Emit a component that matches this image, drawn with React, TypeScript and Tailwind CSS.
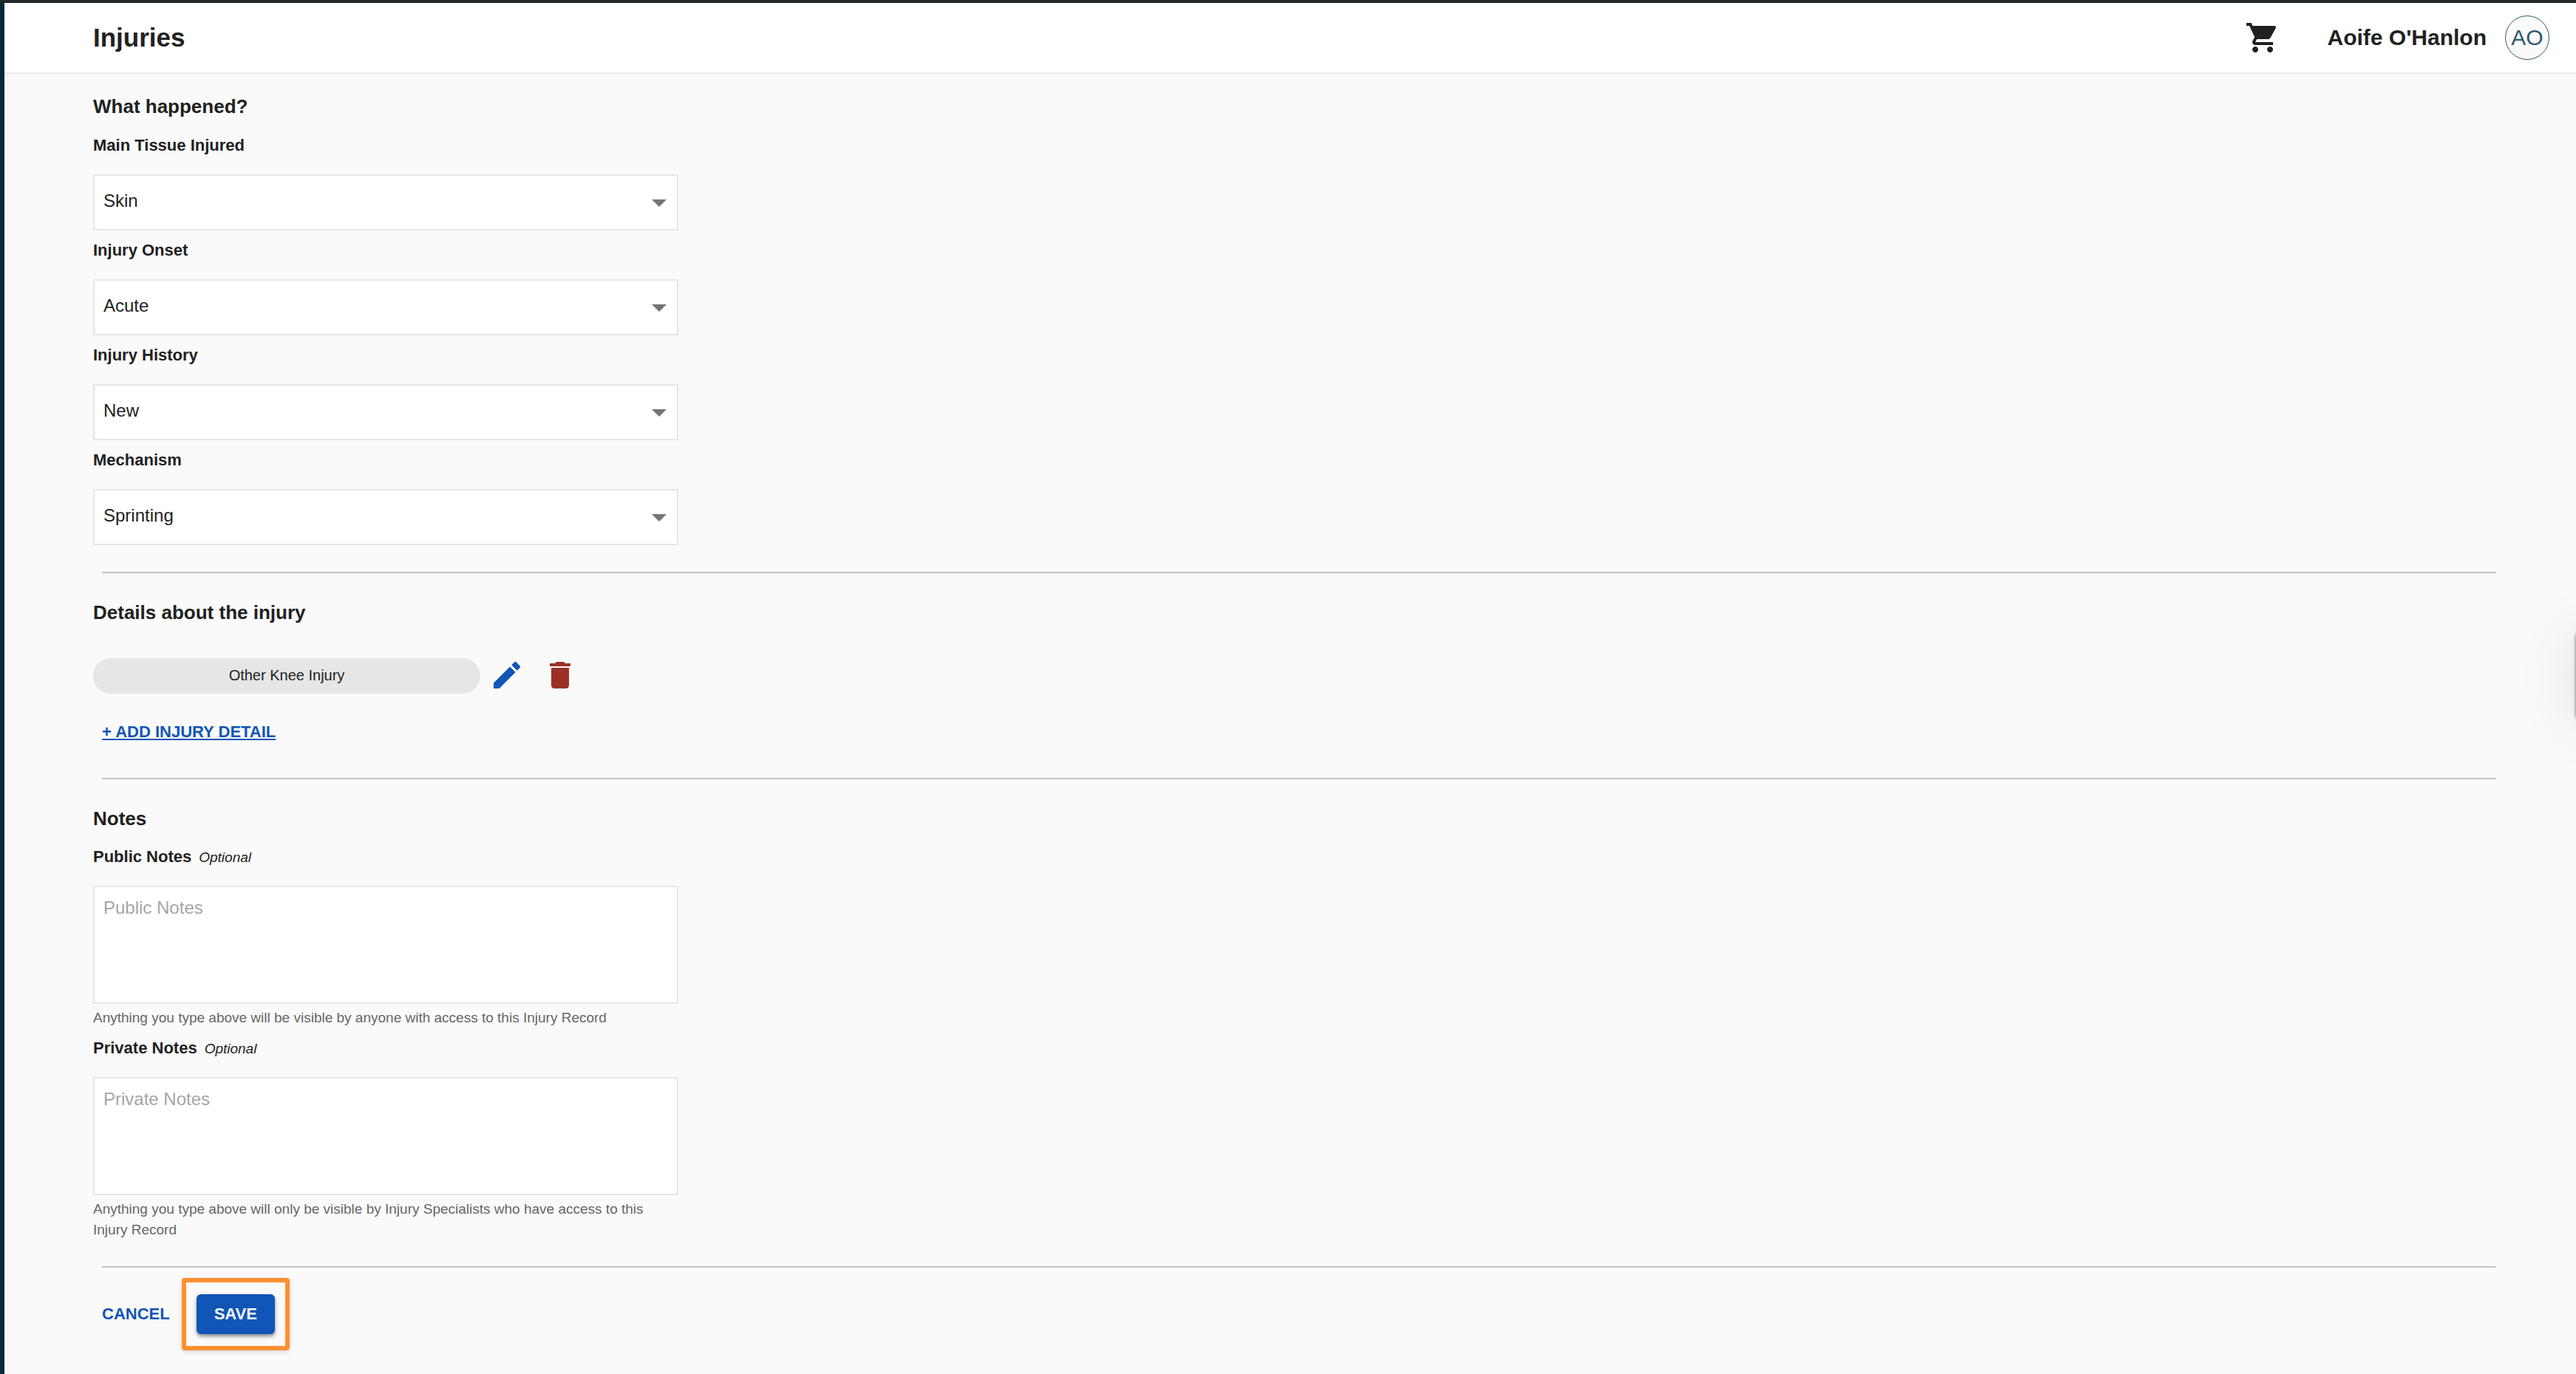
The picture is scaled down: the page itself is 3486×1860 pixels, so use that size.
import { useState, type ReactNode } from "react";
import { MdArrowDropDown, MdDelete, MdEdit, MdShoppingCart } from "react-icons/md";

type SelectFieldProps = {
  id: string;
  label: string;
  initial: string;
  options: string[];
};

function FieldLabel({ id, optional, children }: { id: string; optional?: boolean; children: ReactNode }) {
  return (
    <div className="mt-[11px] mb-[23px] flex h-8 items-baseline gap-2.5">
      <label htmlFor={id} className="text-[22px] font-bold leading-8">
        {children}
      </label>
      {optional && <em className="text-[19px] leading-8">Optional</em>}
    </div>
  );
}

function SelectField({ id, label, initial, options }: SelectFieldProps) {
  const [value, setValue] = useState(initial);
  return (
    <div className="flex w-full max-w-[792px] flex-col">
      <FieldLabel id={id}>{label}</FieldLabel>
      <div className="relative">
        <select
          id={id}
          value={value}
          onChange={(e) => setValue(e.target.value)}
          className="block h-[76px] w-full appearance-none border-2 border-[#e6e6e6] bg-white pl-3 pr-12 pb-1 text-2xl"
        >
          {options.map((option) => (
            <option key={option}>{option}</option>
          ))}
        </select>
        <MdArrowDropDown
          aria-hidden
          className="pointer-events-none absolute top-3.5 right-0.5 size-12 text-[#757575]"
        />
      </div>
    </div>
  );
}

function NotesField({ id, label, help }: { id: string; label: string; help: string }) {
  return (
    <div className="flex w-full max-w-[792px] flex-col">
      <FieldLabel id={id} optional>
        {label}
      </FieldLabel>
      <textarea
        id={id}
        placeholder={label}
        aria-describedby={`${id}-help`}
        className="block h-40 w-full resize-none border-2 border-[#e6e6e6] bg-white p-3 text-2xl leading-8 placeholder:text-[#a6a6a6]"
      />
      <p id={`${id}-help`} className="pt-[5px] text-[19px] leading-7 text-[#666666]">
        {help}
      </p>
    </div>
  );
}

function SectionTitle({ children }: { children: ReactNode }) {
  return <h2 className="text-[26px] font-bold leading-9">{children}</h2>;
}

function Divider() {
  return <hr className="ml-3 border-t-2 border-[#c4c4c4]" />;
}

const selects: SelectFieldProps[] = [
  { id: "tissue", label: "Main Tissue Injured", initial: "Skin", options: ["Skin", "Bone", "Muscle", "Ligament"] },
  { id: "onset", label: "Injury Onset", initial: "Acute", options: ["Acute", "Gradual"] },
  { id: "history", label: "Injury History", initial: "New", options: ["New", "Recurrent"] },
  { id: "mechanism", label: "Mechanism", initial: "Sprinting", options: ["Sprinting", "Jumping", "Tackling"] },
];

export default function App() {
  return (
    <div className="relative flex min-h-screen flex-col overflow-hidden border-t-4 border-[#23262a] bg-[#fafafa] font-['Liberation_Sans',Arial,sans-serif] text-[#212121]">
      <div className="flex grow">
        <div className="w-1.5 shrink-0 bg-[#04293d]" />
        <div className="min-w-0 grow">
          <header className="flex h-24 items-center border-b-2 border-[#e9e9e9] bg-white pl-[120px] pr-9">
            <h1 className="grow text-[35px] font-bold leading-10">Injuries</h1>
            <button type="button" aria-label="Shopping cart" className="mr-16">
              <MdShoppingCart className="size-12" />
            </button>
            <span className="mr-[25px] text-3xl font-bold">Aoife O'Hanlon</span>
            <span className="flex size-[60px] items-center justify-center rounded-full border border-[#33566f] bg-[#fafafa] text-3xl text-[#33566f]">
              AO
            </span>
          </header>

          <main className="pt-[26px] pr-[108px] pb-8 pl-[120px]">
            <form onSubmit={(e) => e.preventDefault()}>
              <section className="pb-9">
                <SectionTitle>What happened?</SectionTitle>
                <div className="pt-2">
                  <div className="flex flex-col">
                    {selects.map((field) => (
                      <SelectField key={field.id} {...field} />
                    ))}
                  </div>
                </div>
              </section>

              <Divider />

              <section className="pt-[35px]">
                <SectionTitle>Details about the injury</SectionTitle>
                <div className="mt-11 flex h-12 items-center">
                  <span className="h-12 w-[524px] rounded-full bg-[#e6e6e6] text-center text-xl leading-[46px]">
                    Other Knee Injury
                  </span>
                  <button type="button" aria-label="Edit injury detail" className="mb-0.5 ml-3">
                    <MdEdit className="size-12 text-[#1155b6]" />
                  </button>
                  <button type="button" aria-label="Delete injury detail" className="mb-0.5 ml-6">
                    <MdDelete className="size-12 text-[#9c3024]" />
                  </button>
                </div>
                <div className="mt-9 mb-[46px] ml-3 h-8 leading-8">
                  <a
                    href="#add"
                    className="text-[22px] font-bold leading-8 text-[#1155b6] underline decoration-2 underline-offset-2"
                  >
                    + ADD INJURY DETAIL
                  </a>
                </div>
              </section>

              <Divider />

              <section className="pt-[35px] pb-[35px]">
                <SectionTitle>Notes</SectionTitle>
                <div className="pt-[7px]">
                  <div className="flex flex-col">
                    <NotesField
                      id="public-notes"
                      label="Public Notes"
                      help="Anything you type above will be visible by anyone with access to this Injury Record"
                    />
                    <NotesField
                      id="private-notes"
                      label="Private Notes"
                      help="Anything you type above will only be visible by Injury Specialists who have access to this Injury Record"
                    />
                  </div>
                </div>
              </section>

              <Divider />

              <div className="mt-3.5 ml-3 flex items-center gap-4 text-[22px] font-bold leading-8">
                <button type="button" className="text-[#1155b6]">
                  CANCEL
                </button>
                <div className="rounded-sm border-6 border-[#ff902f] px-3.5 py-4 shadow-[0_2px_6px_rgba(0,0,0,0.15)]">
                  <button
                    type="submit"
                    className="block h-[54px] rounded-md bg-[#1155b6] px-6 text-[#f5f7fb] shadow-[0_3px_5px_rgba(0,0,0,0.45)]"
                  >
                    SAVE
                  </button>
                </div>
              </div>
            </form>
          </main>
        </div>
      </div>
      <div
        aria-hidden
        className="absolute top-[850px] left-full h-[120px] w-16 rounded-lg bg-white shadow-[0_1px_4px_rgba(0,0,0,0.6),0_4px_80px_rgba(0,0,0,0.12)]"
      />
    </div>
  );
}
